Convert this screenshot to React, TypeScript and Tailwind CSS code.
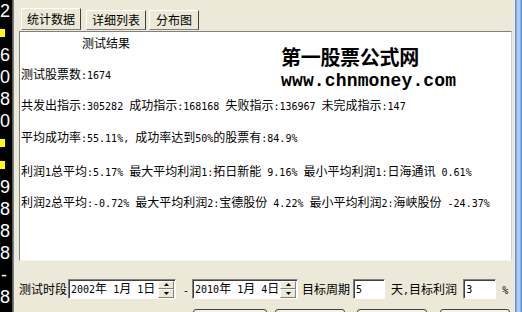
import React from "react";

const cjk = "font-['Noto_Sans_CJK_SC',sans-serif]";

// ASCII runs are drawn half-width (6px) like the old bitmap font, CJK at 12px
function Mixed({ text }: { text: string }) {
  const parts = text.split(/([\x20-\x7e]+)/);
  return (
    <>
      {parts.map((p, i) =>
        /^[\x20-\x7e]+$/.test(p) ? (
          <span key={i} className="font-['DejaVu_Sans_Mono',monospace] text-[10px] whitespace-pre">
            {p}
          </span>
        ) : p ? (
          <span key={i}>{p}</span>
        ) : null
      )}
    </>
  );
}

const strip = ["2", "y", "6", "0", "8", "0", "y", "y", "9", "8", "8", "8", "-", "8"];

const lines = [
  { text: "测试股票数:1674", mt: "mt-[15px]" },
  { text: "共发出指示:305282 成功指示:168168 失败指示:136967 未完成指示:147", mt: "mt-[15px]" },
  { text: "平均成功率:55.11%, 成功率达到50%的股票有:84.9%", mt: "mt-[16px]" },
  { text: "利润1总平均:5.17% 最大平均利润1:拓日新能 9.16% 最小平均利润1:日海通讯 0.61%", mt: "mt-[18px]" },
  { text: "利润2总平均:-0.72% 最大平均利润2:宝德股份 4.22% 最小平均利润2:海峡股份 -24.37%", mt: "mt-[15px]" },
];

function Spinner() {
  return (
    <div className="flex flex-col w-[16px] h-[17px] mr-[1px]">
      {["up", "down"].map((d) => (
        <div
          key={d}
          className="flex-1 flex items-center justify-center bg-[#ECE9D8] border border-t-white border-l-white border-r-[#808080] border-b-[#808080]"
        >
          <svg width="5" height="3" viewBox="0 0 5 3">
            {d === "up" ? <path d="M2.5 0 L5 3 L0 3 Z" fill="#000" /> : <path d="M0 0 L5 0 L2.5 3 Z" fill="#000" />}
          </svg>
        </div>
      ))}
    </div>
  );
}

function DateBox({ text, w }: { text: string; w: string }) {
  return (
    <div
      className={`${w} h-[20px] flex items-center justify-between bg-white border border-t-[#808080] border-l-[#808080] border-r-white border-b-white shadow-[inset_1px_1px_0_#404040]`}
    >
      <span className="pl-[2px] leading-[16px]">
        <Mixed text={text} />
      </span>
      <Spinner />
    </div>
  );
}

function Field({ value, w }: { value: string; w: string }) {
  return (
    <div
      className={`${w} h-[20px] flex items-center bg-white border border-t-[#808080] border-l-[#808080] border-r-white border-b-white shadow-[inset_1px_1px_0_#404040] pl-[2px]`}
    >
      <Mixed text={value} />
    </div>
  );
}

export default function App() {
  return (
    <div className={`w-[522px] h-[312px] flex overflow-hidden text-black text-[12px] ${cjk}`}>
      <div className="w-[13px] bg-black flex flex-col border-r border-[#5a5a5a] shrink-0">
        {strip.map((s, i) => (
          <div key={i} className="h-[22px] shrink-0 flex items-center overflow-hidden">
            {s === "y" ? (
              <div className="w-[5px] h-[8px] bg-[#FFFF00]" />
            ) : (
              <div className="w-full text-right pr-[5px] text-white text-[18px] leading-none font-['Liberation_Sans',sans-serif]">
                {s}
              </div>
            )}
          </div>
        ))}
      </div>

      <div className="flex-1 bg-[#ECE9D8] flex flex-col border-l border-[#808080]">
        <div className="shrink-0 flex items-end gap-[4px] pt-[8px] pl-[7px] h-[30px]">
          <div className="h-[22px] px-[5px] flex items-center bg-[#ECE9D8] border border-t-white border-l-white border-r-[#404040] border-b-[#808080]">
            统计数据
          </div>
          <div className="h-[20px] px-[5px] flex items-center ml-[1px] border border-t-white border-l-white border-r-[#404040] border-b-[#808080]">
            详细列表
          </div>
          <div className="h-[20px] px-[6px] flex items-center -ml-[1px] border border-t-white border-l-white border-r-[#404040] border-b-[#808080]">
            分布图
          </div>
        </div>

        <div className="shrink-0 relative ml-[5px] mr-[3px] mt-[1px] h-[230px] bg-white border border-t-[#808080] border-l-[#808080] border-r-[#D4D0C8] border-b-[#F4F3EE] pl-[1px] pt-[3px]">
          <div className="h-[16px] leading-[16px] pl-[61px]">测试结果</div>
          {lines.map((l, i) => (
            <div key={i} className={`h-[16px] leading-[16px] whitespace-nowrap ${l.mt}`}>
              <Mixed text={l.text} />
            </div>
          ))}
          <div className="absolute left-[261px] top-[15px] flex flex-col">
            <div className={`text-[20px] leading-[20px] font-bold tracking-[-0.3px] ${cjk}`}>第一股票公式网</div>
            <div className="mt-[4px] text-[18px] leading-[20px] font-bold tracking-[0.15px] font-['Liberation_Mono',monospace]">
              www.chnmoney.com
            </div>
          </div>
        </div>

        <div className="shrink-0 mt-[18px] h-[20px] flex items-center pl-[5px] whitespace-nowrap">
          <span className="mr-[1px]">测试时段</span>
          <DateBox text="2002年 1月 1日" w="w-[108px]" />
          <span className="ml-[7px]">
            <Mixed text="-" />
          </span>
          <span className="ml-[3px]">
            <DateBox text="2010年 1月 4日" w="w-[106px]" />
          </span>
          <span className="ml-[4px]">目标周期</span>
          <span className="ml-[3px]">
            <Field value="5" w="w-[32px]" />
          </span>
          <span className="ml-[6px]">
            <Mixed text="天,目标利润" />
          </span>
          <span className="ml-[6px]">
            <Field value="3" w="w-[33px]" />
          </span>
          <span className="ml-[6px]">
            <Mixed text="%" />
          </span>
        </div>

        <div className="shrink-0 mt-[10px] flex pl-[179px]">
          <div className="w-[74px] h-[22px] rounded-[3px] border border-[#404040] bg-[#F4F3EE]" />
          <div className="ml-[8px] w-[70px] h-[22px] rounded-[3px] border border-[#404040] bg-[#F4F3EE]" />
          <div className="ml-[12px] w-[70px] h-[22px] rounded-[3px] border border-[#404040] bg-[#F4F3EE]" />
          <div className="ml-[13px] w-[70px] h-[22px] rounded-[3px] border border-[#404040] bg-[#F4F3EE]" />
        </div>
      </div>

      <div className="w-[7px] shrink-0 bg-[linear-gradient(to_right,#4F7FD0,#A9C8F2_35%,#B8D4F6_60%,#4A7DD4)]" />
    </div>
  );
}
